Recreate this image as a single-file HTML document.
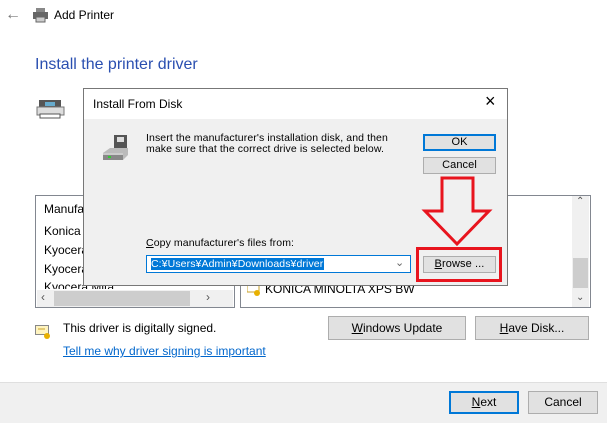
<!DOCTYPE html>
<html><head><meta charset="utf-8"><style>
*{margin:0;padding:0;box-sizing:border-box}
body{width:607px;height:423px;overflow:hidden;background:#fff;font-family:"Liberation Sans","Noto Sans CJK JP",sans-serif;font-size:12px;color:#000;position:relative}
.a{position:absolute}
.btn{position:absolute;background:#e1e1e1;border:1px solid #adadad;text-align:center;font-size:12px}
.dlg{font-family:"Liberation Sans","Noto Sans CJK JP",sans-serif;font-size:10.5px;letter-spacing:0.1px}
u{text-decoration:underline}
</style></head><body>
<div class="a" style="left:5px;top:6px;color:#777;font-size:16px">&#8592;</div>
<svg class="a" style="left:33px;top:8px" width="15" height="15"><rect x="3" y="0" width="9" height="4" fill="#888"/><rect x="0" y="4" width="15" height="7" fill="#666"/><rect x="3" y="9" width="9" height="5" fill="#ccc" stroke="#666"/></svg>
<div class="a" style="left:54px;top:8px;font-size:12px">Add Printer</div>
<div class="a" style="left:35px;top:56px;font-size:16px;color:#2a4fb0">Install the printer driver</div>
<svg class="a" style="left:36px;top:100px" width="30" height="20"><rect x="3" y="0" width="22" height="8" fill="#555"/><rect x="9" y="2" width="10" height="4" fill="#6ac"/><rect x="1" y="7" width="27" height="8" fill="#ddd" stroke="#777"/><rect x="4" y="14" width="20" height="4" fill="#fff" stroke="#555"/></svg>

<div class="a" style="left:35px;top:195px;width:200px;height:113px;border:1px solid #828790;background:#fff">
<div class="a" style="left:8px;top:6px">Manufa</div>
<div class="a" style="left:8px;top:28px">Konica</div>
<div class="a" style="left:8px;top:47px">Kyocera</div>
<div class="a" style="left:8px;top:66px">Kyocera</div>
<div class="a" style="left:8px;top:84px;height:9px;overflow:hidden">Kyocera Mita</div>
<div class="a" style="left:1px;top:94px;width:196px;height:17px;background:#f0f0f0"></div>
<div class="a" style="left:18px;top:95px;width:136px;height:15px;background:#cdcdcd"></div>
<div class="a" style="left:5px;top:94px;color:#555">&#8249;</div>
<div class="a" style="left:170px;top:94px;color:#555">&#8250;</div>
</div>
<div class="a" style="left:240px;top:195px;width:351px;height:113px;border:1px solid #828790;background:#fff">
<div class="a" style="left:331px;top:0;width:17px;height:111px;background:#f0f0f0"></div>
<div class="a" style="left:332px;top:62px;width:15px;height:30px;background:#cdcdcd"></div>
<div class="a" style="left:335px;top:0;color:#555;font-size:10px">&#8963;</div>
<div class="a" style="left:335px;top:96px;color:#555;font-size:10px">&#8964;</div>
<svg class="a" style="left:6px;top:87px" width="14" height="14"><rect x="0" y="1" width="12" height="8" fill="#fff" stroke="#c9a227"/><circle cx="10" cy="10" r="3" fill="#e8b000"/></svg>
<div class="a" style="left:24px;top:86px;height:11px;overflow:hidden">KONICA MINOLTA XPS BW</div>
</div>

<svg class="a" style="left:35px;top:324px" width="16" height="16"><rect x="0.5" y="1.5" width="13" height="9" fill="#fff4c0" stroke="#888"/><line x1="3" y1="5" x2="10" y2="5" stroke="#c9a227"/><circle cx="12" cy="12" r="3" fill="#e8b000"/></svg>
<div class="a" style="left:63px;top:321px">This driver is digitally signed.</div>
<div class="a" style="left:63px;top:344px;color:#0066cc;text-decoration:underline">Tell me why driver signing is important</div>
<div class="btn" style="left:328px;top:316px;width:138px;height:24px;line-height:22px"><u>W</u>indows Update</div>
<div class="btn" style="left:475px;top:316px;width:114px;height:24px;line-height:22px"><u>H</u>ave Disk...</div>

<div class="a" style="left:0;top:382px;width:607px;height:41px;background:#f0f0f0;border-top:1px solid #dfdfdf"></div>
<div class="btn" style="left:449px;top:391px;width:70px;height:23px;line-height:19px;border:2px solid #0078d7"><u>N</u>ext</div>
<div class="btn" style="left:528px;top:391px;width:70px;height:23px;line-height:21px">Cancel</div>

<div class="a dlg" style="left:83px;top:88px;width:425px;height:198px;border:1px solid #777;background:#f0f0f0">
<div class="a" style="left:0;top:0;width:423px;height:30px;background:#fff"></div>
<div class="a" style="left:9px;top:8px;font-size:12px;letter-spacing:0">Install From Disk</div>
<div class="a" style="left:401px;top:2px;font-size:18px">&#215;</div>
<svg class="a" style="left:16px;top:46px" width="30" height="30" viewBox="0 0 30 30"><rect x="14" y="0" width="13" height="14" fill="#555"/><rect x="17" y="2" width="7" height="5" fill="#ddd"/><path d="M3 18 L10 13 L28 13 L28 20 L23 25 L3 25 Z" fill="#bbb"/><rect x="3" y="18" width="20" height="7" fill="#888"/><rect x="3" y="18" width="20" height="2" fill="#ccc"/><rect x="8" y="21" width="3" height="2" fill="#3c3"/></svg>
<div class="a" style="left:62px;top:44px;line-height:11px;white-space:nowrap">Insert the manufacturer's installation disk, and then<br>make sure that the correct drive is selected below.</div>
<div class="btn" style="left:339px;top:45px;width:73px;height:17px;line-height:13px;border:2px solid #0078d7;font-size:11px">OK</div>
<div class="btn" style="left:339px;top:68px;width:73px;height:17px;line-height:15px;font-size:11px">Cancel</div>
<div class="a" style="left:62px;top:148px"><u>C</u>opy manufacturer's files from:</div>
<div class="a" style="left:62px;top:166px;width:265px;height:18px;border:1px solid #0078d7;background:#fff">
<div class="a" style="left:4px;top:2px;height:12px;background:#0078d7;color:#fff;line-height:12px;white-space:nowrap;padding-right:1px">C:¥Users¥Admin¥Downloads¥driver</div>
<div class="a" style="left:248px;top:0px;color:#666;font-size:11px">&#8964;</div>
</div>
<div class="btn" style="left:339px;top:167px;width:73px;height:17px;line-height:15px;font-size:11px"><u>B</u>rowse ...</div>
</div>

<div class="a" style="left:416px;top:247px;width:86px;height:35px;border:3px solid #e8141e"></div>
<svg class="a" style="left:420px;top:175px" width="75" height="75"><path d="M22 3 L53 3 L53 36 L69 36 L37 69 L5 36 L22 36 Z" fill="none" stroke="#e8141e" stroke-width="3"/></svg>
</body></html>
